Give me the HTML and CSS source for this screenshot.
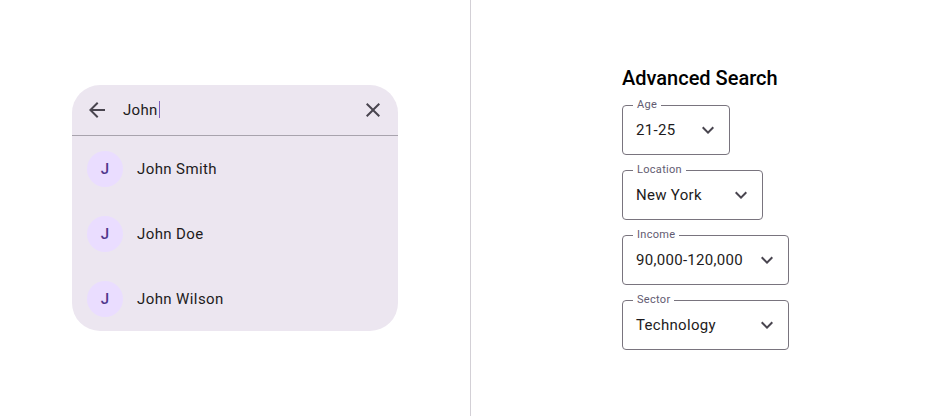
FILE: index.html
```html
<!DOCTYPE html>
<html>
<head>
<meta charset="utf-8">
<link rel="stylesheet" href="styles.css">
</head>
<body>
<div class="page">
  <section class="pane pane-left">
    <div class="search">
      <div class="search-bar">
        <svg class="icon" viewBox="0 0 24 24" width="24" height="24"><path d="M20 11H7.83l5.59-5.59L12 4l-8 8 8 8 1.41-1.41L7.83 13H20v-2z"/></svg>
        <div class="query">John<span class="caret"></span></div>
        <svg class="icon" viewBox="0 0 24 24" width="24" height="24"><path d="M19 6.41L17.59 5 12 10.59 6.41 5 5 6.41 10.59 12 5 17.59 6.41 19 12 13.41 17.59 19 19 17.59 13.41 12z"/></svg>
      </div>
      <ul class="results">
        <li class="result"><span class="avatar">J</span><span class="name">John Smith</span></li>
        <li class="result"><span class="avatar">J</span><span class="name">John Doe</span></li>
        <li class="result"><span class="avatar">J</span><span class="name">John Wilson</span></li>
      </ul>
    </div>
  </section>
  <section class="pane pane-right">
    <div class="form">
      <h2 class="title">Advanced Search</h2>
      <div class="field w-age">
        <span class="label">Age</span>
        <span class="value">21-25</span>
        <svg class="chev" viewBox="0 0 24 24" width="24" height="24"><path d="M16.59 8.59L12 13.17 7.41 8.59 6 10l6 6 6-6z"/></svg>
      </div>
      <div class="field w-loc">
        <span class="label">Location</span>
        <span class="value">New York</span>
        <svg class="chev" viewBox="0 0 24 24" width="24" height="24"><path d="M16.59 8.59L12 13.17 7.41 8.59 6 10l6 6 6-6z"/></svg>
      </div>
      <div class="field w-wide">
        <span class="label">Income</span>
        <span class="value">90,000-120,000</span>
        <svg class="chev" viewBox="0 0 24 24" width="24" height="24"><path d="M16.59 8.59L12 13.17 7.41 8.59 6 10l6 6 6-6z"/></svg>
      </div>
      <div class="field w-wide">
        <span class="label">Sector</span>
        <span class="value">Technology</span>
        <svg class="chev" viewBox="0 0 24 24" width="24" height="24"><path d="M16.59 8.59L12 13.17 7.41 8.59 6 10l6 6 6-6z"/></svg>
      </div>
    </div>
  </section>
</div>
</body>
</html>
```

FILE: styles.css
```css
* { box-sizing: border-box; }
html, body { margin: 0; padding: 0; background: #ffffff; }
body { font-family: Roboto, "Noto Sans", sans-serif; color: #1D1B20; }
.page { display: flex; width: 940px; height: 416px; }
.pane { display: flex; align-items: center; justify-content: center; height: 416px; }
.pane-left { width: 471px; border-right: 1px solid #d3d0d6; }
.pane-right { width: 469px; }

.search { width: 326px; background: #ECE6F0; border-radius: 28px; overflow: hidden; }
.search-bar { display: flex; align-items: center; height: 51px; padding: 0 13px 1px 13px; border-bottom: 1px solid #a8a3ad; }
.icon { fill: #49454F; flex: none; }
.query { flex: 1; margin-left: 14px; font-size: 15px; letter-spacing: 0.3px; color: #1D1B20; display: flex; align-items: center; }
.caret { display: inline-block; width: 1px; height: 17px; background: #7e5fc0; margin-left: 1px; }
.results { list-style: none; margin: 0; padding: 0; }
.result { display: flex; align-items: center; height: 65px; padding-left: 15px; }
.avatar { width: 36px; height: 36px; border-radius: 50%; background: #EADDFF; color: #4F378B; display: flex; align-items: center; justify-content: center; font-size: 15px; font-weight: 500; flex: none; }
.name { margin-left: 14px; font-size: 15px; letter-spacing: 0.4px; color: #1D1B20; }

.form { display: flex; flex-direction: column; align-items: flex-start; width: 167px; }
.title { margin: 0 0 15px 0; font-size: 20px; font-weight: 500; line-height: 24px; color: #000; white-space: nowrap; }
.field { position: relative; display: flex; align-items: center; height: 50px; border: 1px solid #79747E; border-radius: 4px; padding: 0 9px 0 13px; margin-bottom: 15px; }
.field:last-child { margin-bottom: 0; }
.w-age { width: 108px; }
.w-loc { width: 141px; }
.w-wide { width: 167px; }
.label { position: absolute; top: -8px; left: 10px; padding: 0 4px; background: #fff; font-size: 11px; line-height: 14px; color: #625B71; letter-spacing: 0.3px; }
.value { flex: 1; font-size: 15px; letter-spacing: 0.3px; color: #1D1B20; white-space: nowrap; }
.chev { fill: #49454F; flex: none; width: 24px; height: 24px; }
```
